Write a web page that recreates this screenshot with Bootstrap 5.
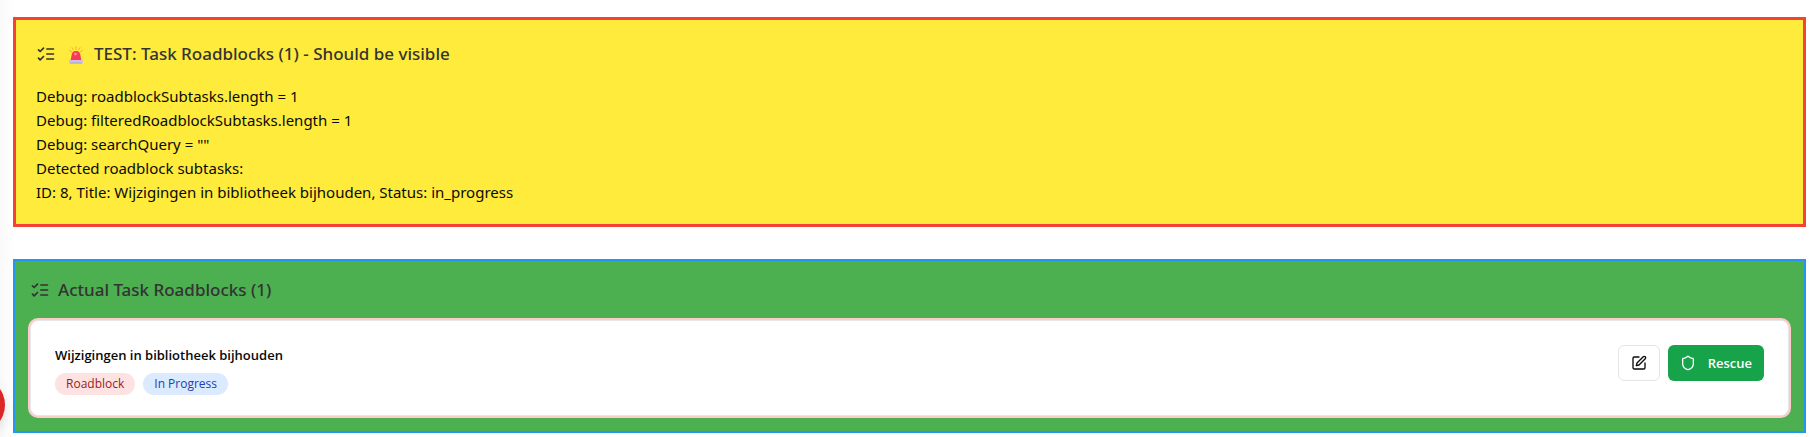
<!DOCTYPE html>
<html lang="en">
<head>
<meta charset="utf-8">
<meta name="viewport" content="width=device-width, initial-scale=1">
<title>Task Roadblocks</title>
<link href="https://cdn.jsdelivr.net/npm/bootstrap@5.3.0/dist/css/bootstrap.min.css" rel="stylesheet">
<style>
body{font-family:"Noto Sans","Open Sans",sans-serif;font-size:15px;line-height:24px;color:#0a0a0a;background:#fff linear-gradient(90deg,#f9f9f9,#fff) no-repeat 0 0/13px 100%;overflow-x:hidden}
.page{padding:17px 5px 4px 13px}
.panel-debug{background:#ffeb3b;border:3px solid #f44336;padding:20px;margin-bottom:32px}
.panel-actual{background:#4caf50;border:2px solid #2196f3;padding:15px}
.panel-title{font-size:17px;line-height:28px;font-weight:500;color:#333}
.icon-list{width:20px;height:20px}
.task-card{border:1px solid #e5e7eb;border-radius:8px;box-shadow:0 0 0 2px #fecaca;padding:20px 24px}
.task-title{font-family:"Open Sans","Noto Sans",sans-serif;font-size:13px;line-height:20px;font-weight:600}
.pill{font-family:"Open Sans","Noto Sans",sans-serif;font-size:12px;line-height:16px;font-weight:500;padding:3px 11px;border-radius:11px}
.pill-red{background:#fee2e2;color:#991b1b}
.pill-blue{background:#dbeafe;color:#1e40af}
.btn-task{height:36px;border-radius:6px;font-family:"Open Sans","Noto Sans",sans-serif;font-size:13px;line-height:20px;font-weight:600;padding:0 12px}
.btn-edit{border:1px solid #e5e5e5;background:#fff;color:#0a0a0a}
.btn-rescue{background:#16a34a;color:#fff;border:0}
.btn-edit:hover{background:#f5f5f5}
.btn-rescue:hover{background:#15803d;color:#fff}
.fab{width:56px;height:56px;left:-51px;bottom:4px;background:#dc2626;box-shadow:0 4px 12px rgba(0,0,0,.12)}
</style>
</head>
<body>
<svg class="d-none" aria-hidden="true">
  <symbol id="list-checks" viewBox="0 0 24 24" fill="none" stroke="currentColor" stroke-width="2" stroke-linecap="round" stroke-linejoin="round"><path d="m3 17 2 2 4-4M3 7l2 2 4-4M13 6h8M13 12h8M13 18h8"/></symbol>
</svg>
<main class="page position-relative">
  <section class="panel-debug">
    <h2 class="panel-title d-flex align-items-center gap-2 mb-3">
      <svg class="icon-list" aria-hidden="true"><use href="#list-checks"/></svg>
      <svg width="22" height="20" viewBox="0 0 22 20" role="img" aria-label="Alarm">
        <g stroke="#f9b233" stroke-width="1" stroke-linecap="round"><path d="M12 2.500v3M8 3.500l1.300 2.200M16 3.500l-1.300 2.200M5.500 6.500l2 1.300M18.500 6.500l-2 1.300"/></g>
        <path d="M6.500 16.500 8 9.500q.6-2.500 3-2.500h2q2.400 0 3 2.500l1.500 7z" fill="#f83a5a"/>
        <circle cx="11.500" cy="10" r="1.300" fill="#ff9aa8"/>
        <rect x="5" y="16" width="14" height="3.500" rx="1" fill="#cdbfe0"/><path d="M6 19h12" stroke="#b3a4cc"/>
      </svg>
      <span>TEST: Task Roadblocks (1) - Should be visible</span>
    </h2>
    <div>Debug: roadblockSubtasks.length = 1</div>
    <div>Debug: filteredRoadblockSubtasks.length = 1</div>
    <div>Debug: searchQuery = ""</div>
    <div>Detected roadblock subtasks:</div>
    <div>ID: 8, Title: Wijzigingen in bibliotheek bijhouden, Status: in_progress</div>
  </section>
  <section class="panel-actual">
    <h2 class="panel-title d-flex align-items-center gap-2 mb-3">
      <svg class="icon-list" aria-hidden="true"><use href="#list-checks"/></svg>
      <span>Actual Task Roadblocks (1)</span>
    </h2>
    <article class="task-card bg-white d-flex justify-content-between align-items-start">
      <div class="pt-1">
        <h3 class="task-title mb-2">Wijzigingen in bibliotheek bijhouden</h3>
        <div class="d-flex gap-2">
          <span class="pill pill-red">Roadblock</span>
          <span class="pill pill-blue">In Progress</span>
        </div>
      </div>
      <div class="d-flex gap-2 pt-1">
        <button type="button" class="btn btn-task btn-edit d-flex align-items-center" aria-label="Edit">
          <svg width="16" height="16" viewBox="0 0 24 24" fill="none" stroke="currentColor" stroke-width="2" stroke-linecap="round" stroke-linejoin="round"><path d="M12 3H5a2 2 0 0 0-2 2v14a2 2 0 0 0 2 2h14a2 2 0 0 0 2-2v-7"/><path d="M18.375 2.625a2.121 2.121 0 1 1 3 3L12 15l-4 1 1-4Z"/></svg>
        </button>
        <button type="button" class="btn btn-task btn-rescue d-flex align-items-center gap-2">
          <svg class="me-1" width="16" height="16" viewBox="0 0 24 24" fill="none" stroke="currentColor" stroke-width="2" stroke-linecap="round" stroke-linejoin="round" aria-hidden="true"><path d="M20 13c0 5-3.500 7.500-7.660 8.950a1 1 0 0 1-.67-.01C7.500 20.500 4 18 4 13V6a1 1 0 0 1 1-1c2 0 4.500-1.200 6.240-2.720a1.170 1.170 0 0 1 1.520 0C14.510 3.810 17 5 19 5a1 1 0 0 1 1 1z"/></svg>
          <span>Rescue</span>
        </button>
      </div>
    </article>
  </section>
  <button type="button" class="fab btn border-0 rounded-circle position-absolute" aria-label="Alerts"></button>
</main>
<script src="https://cdn.jsdelivr.net/npm/bootstrap@5.3.0/dist/js/bootstrap.bundle.min.js"></script>
</body>
</html>
